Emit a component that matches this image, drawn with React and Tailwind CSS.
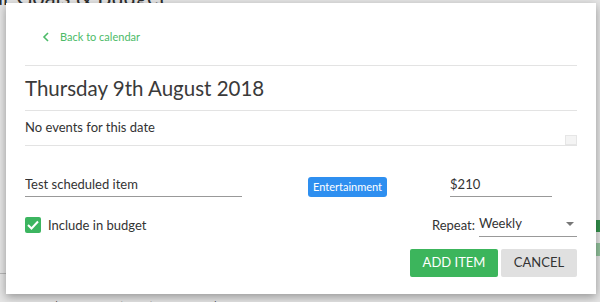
import { useState } from 'react'

function ChevronLeft() {
  return (
    <svg width="8" height="10" viewBox="0 0 8 10" fill="none">
      <path d="M6 1 L2 5 L6 9" stroke="#4cbb68" strokeWidth="1.6" />
    </svg>
  )
}

function Check() {
  return (
    <svg width="12" height="10" viewBox="0 0 12 10" fill="none">
      <path d="M1 5 L4.5 8.5 L11 1.5" stroke="white" strokeWidth="2" />
    </svg>
  )
}

export default function App() {
  const [nome, setNome] = useState('Test scheduled item')
  const [valor, setValor] = useState('$210')
  const [incluir, setIncluir] = useState(true)

  return (
    <div className="relative w-[600px] h-[302px] overflow-hidden bg-white font-['Lato',sans-serif] text-[#333]">

      {/* pagina por tras do modal */}
      <div className="flex flex-col">
        <div className="text-[22px] leading-none -mt-[14px] -ml-[33px] text-[#333]">
          Your Goals &amp; Budget
        </div>
        <div className="flex flex-col -ml-[60px] text-[15px] text-[#444]">
          <div className="mt-[26px]">Total</div>
          <div className="mt-[22px]">Plan</div>
          <div className="mt-[22px]">Plan</div>
          <div className="mt-[18px] font-bold">Budc</div>
          <div className="text-[13px] text-[#777]">weekly</div>
          <div className="mt-[8px]">Item</div>
          <div className="mt-[2px]">Item:</div>
        </div>
        <div className="mt-[12px] h-px w-[40px] bg-[#ccc]" />
        <div className="ml-[52px] mt-[22px] text-[14px] text-[#444]">
          $3,000.00 (75%) earned · $1,000.00 remaining
        </div>
      </div>
      <div className="absolute right-0 top-[220px] w-[8px] h-[12px] bg-[#3aa356]" />
      <div className="absolute right-0 top-[243px] w-[8px] h-[13px] bg-[#a3d9ae]" />

      <div className="absolute inset-0 bg-black/10" />

      {/* modal */}
      <div className="absolute left-[6px] top-[3px] w-[590px] h-[291px] bg-white shadow-[0_3px_9px_rgba(0,0,0,0.35)] px-[19px]">

        <div className="flex items-center gap-[10px] ml-[17px] mt-[26px] text-[11px] text-[#4cbb68]">
          <ChevronLeft />
          <span>Back to calendar</span>
        </div>

        <div className="mt-[19px] border-t border-[#e3e3e3]" />

        <h2 className="text-[20.5px] leading-[44px] text-[#3a3a3a]">
          Thursday 9th August 2018
        </h2>

        <div className="border-t border-[#e3e3e3]" />

        <div className="relative h-[35px] border-b border-[#e3e3e3] flex items-center text-[13px]">
          No events for this date
          <div className="absolute right-0 bottom-0 w-[12px] h-[10px] bg-[#f4f4f4] border border-[#e6e6e6]" />
        </div>

        <div className="flex items-end mt-[29px]">
          <input
            value={nome}
            onChange={(e) => setNome(e.target.value)}
            className="w-[217px] border-b border-[#999] pb-[2px] text-[13px] outline-none bg-transparent"
          />
          <span className="ml-[66px] bg-[#2e8ff0] text-white text-[11px] rounded-[3px] px-[5px] py-[2px]">
            Entertainment
          </span>
          <input
            value={valor}
            onChange={(e) => setValor(e.target.value)}
            className="ml-[63px] w-[102px] border-b border-[#999] pb-[2px] text-[13px] outline-none bg-transparent"
          />
        </div>

        <div className="flex items-center mt-[17px]">
          <button
            onClick={() => setIncluir(!incluir)}
            className="w-[16px] h-[16px] rounded-[2px] bg-[#3cb560] flex items-center justify-center"
          >
            {incluir && <Check />}
          </button>
          <span className="ml-[7px] text-[13px]">Include in budget</span>

          <span className="ml-auto text-[13px]">Repeat:</span>
          <div className="ml-[4px] w-[98px] border-b border-[#999] pb-[2px] flex items-center justify-between text-[13px]">
            <span>Weekly</span>
            <span className="w-0 h-0 border-l-[4px] border-r-[4px] border-t-[4px] border-l-transparent border-r-transparent border-t-[#777] mr-[3px]" />
          </div>
        </div>

        <div className="flex justify-end gap-[3px] mt-[12px]">
          <button className="w-[88px] h-[28px] bg-[#3cb55c] text-white text-[13px] rounded-[2px]">
            ADD ITEM
          </button>
          <button className="w-[76px] h-[28px] bg-[#e0e0e0] text-[#333] text-[13px] rounded-[2px]">
            CANCEL
          </button>
        </div>

      </div>
    </div>
  )
}
